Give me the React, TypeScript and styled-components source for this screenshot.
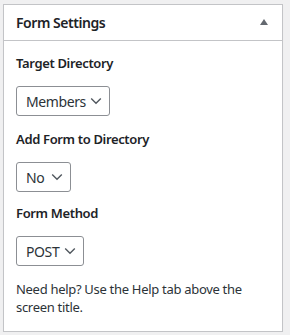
import React from "react";
import styled, { createGlobalStyle } from "styled-components";

const Global = createGlobalStyle`
  html, body { margin: 0; padding: 0; background: #f0f0f1; }
  body { font-family: "Noto Sans", "Open Sans", sans-serif; color: #1d2327; }
`;

const Page = styled.div`
  padding: 4px 7px 0 3px;
`;

const Panel = styled.section`
  width: 280px;
  box-sizing: border-box;
  background: #fff;
  border: 1px solid #c3c4c7;
  box-shadow: 0 1px 1px rgba(0, 0, 0, 0.04);
`;

const Header = styled.div`
  display: flex;
  align-items: center;
  justify-content: space-between;
  height: 35px;
  padding: 0 14px 0 12px;
  border-bottom: 1px solid #c3c4c7;
`;

const Title = styled.h2`
  margin: 0;
  font-size: 14px;
  font-weight: 600;
  line-height: 1.4;
  letter-spacing: -0.45px;
`;

const Toggle = styled.span`
  width: 0;
  height: 0;
  border-left: 4px solid transparent;
  border-right: 4px solid transparent;
  border-bottom: 6px solid #646970;
  margin-top: -1px;
`;

const Inside = styled.div`
  display: flex;
  flex-direction: column;
  align-items: flex-start;
  padding: 13px 12px 15px;
`;

const Label = styled.p<{ $gap?: number }>`
  margin: 0 0 ${(p) => p.$gap ?? 14}px;
  font-size: 13px;
  font-weight: 600;
  line-height: 18px;
  letter-spacing: -0.35px;
`;

const SelectBox = styled.div<{ $width: number; $gap?: number }>`
  display: flex;
  align-items: center;
  justify-content: space-between;
  box-sizing: border-box;
  width: ${(p) => p.$width}px;
  height: 30px;
  padding: 0 7px 0 9px;
  margin-bottom: ${(p) => p.$gap ?? 14}px;
  border: 1px solid #8c8f94;
  border-radius: 3px;
  background: #fff;
  font-size: 14px;
  letter-spacing: -0.4px;
  color: #2c3338;
`;

const Help = styled.p`
  margin: 0;
  font-size: 13px;
  line-height: 18px;
  letter-spacing: -0.3px;
  color: #2c3338;
`;

const Chevron = () => (
  <svg width="12" height="8" viewBox="0 0 12 8" aria-hidden="true">
    <path d="M1.2 1.6l4.8 4.6 4.8-4.6" fill="none" stroke="#50575e" strokeWidth="1.4" />
  </svg>
);

const Select = ({ value, width, gap }: { value: string; width: number; gap?: number }) => (
  <SelectBox $width={width} $gap={gap}>
    <span>{value}</span>
    <Chevron />
  </SelectBox>
);

export default function App() {
  return (
    <>
      <Global />
      <Page>
        <Panel>
          <Header>
            <Title>Form Settings</Title>
            <Toggle />
          </Header>
          <Inside>
            <Label>Target Directory</Label>
            <Select value="Members" width={94} />
            <Label>Add Form to Directory</Label>
            <Select value="No" width={55} gap={12} />
            <Label>Form Method</Label>
            <Select value="POST" width={68} />
            <Help>Need help? Use the Help tab above the screen title.</Help>
          </Inside>
        </Panel>
      </Page>
    </>
  );
}
